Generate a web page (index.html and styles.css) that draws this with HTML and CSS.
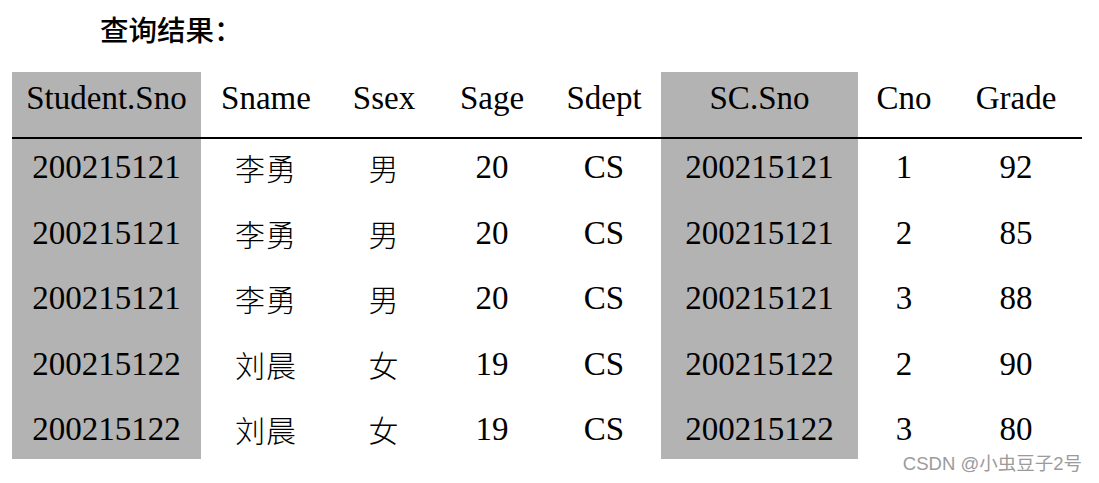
FILE: index.html
```html
<!DOCTYPE html>
<html lang="zh">
<head>
<meta charset="utf-8">
<title>查询结果</title>
<link rel="stylesheet" href="styles.css">
</head>
<body>
<div class="page">
  <h1 class="title">查询结果：</h1>
  <table class="result">
    <colgroup>
      <col class="c1"><col class="c2"><col class="c3"><col class="c4">
      <col class="c5"><col class="c6"><col class="c7"><col class="c8">
    </colgroup>
    <thead>
      <tr class="head">
        <th class="shade">Student.Sno</th><th>Sname</th><th>Ssex</th><th>Sage</th><th>Sdept</th><th class="shade">SC.Sno</th><th>Cno</th><th>Grade</th>
      </tr>
    </thead>
    <tbody>
      <tr class="row">
        <td class="shade">200215121</td><td><span class="cjk">李勇</span></td><td><span class="cjk">男</span></td><td>20</td><td>CS</td><td class="shade">200215121</td><td>1</td><td>92</td>
      </tr>
      <tr class="row">
        <td class="shade">200215121</td><td><span class="cjk">李勇</span></td><td><span class="cjk">男</span></td><td>20</td><td>CS</td><td class="shade">200215121</td><td>2</td><td>85</td>
      </tr>
      <tr class="row">
        <td class="shade">200215121</td><td><span class="cjk">李勇</span></td><td><span class="cjk">男</span></td><td>20</td><td>CS</td><td class="shade">200215121</td><td>3</td><td>88</td>
      </tr>
      <tr class="row">
        <td class="shade">200215122</td><td><span class="cjk">刘晨</span></td><td><span class="cjk">女</span></td><td>19</td><td>CS</td><td class="shade">200215122</td><td>2</td><td>90</td>
      </tr>
      <tr class="row last">
        <td class="shade">200215122</td><td><span class="cjk">刘晨</span></td><td><span class="cjk">女</span></td><td>19</td><td>CS</td><td class="shade">200215122</td><td>3</td><td>80</td>
      </tr>
    </tbody>
  </table>
  <div class="watermark">CSDN @小虫豆子2号</div>
</div>
</body>
</html>
```
FILE: styles.css
```css
html, body {
  margin: 0;
  padding: 0;
  background: #ffffff;
}

.page {
  position: relative;
  width: 1099px;
  height: 483px;
  overflow: hidden;
}

.title {
  margin: 0;
  padding: 13px 0 0 100px;
  height: 72px;
  box-sizing: border-box;
  font-family: "Noto Sans CJK SC", sans-serif;
  font-size: 28.5px;
  line-height: 32px;
  font-weight: 500;
  color: #000;
}

.result {
  margin-left: 12px;
  width: 1070px;
  table-layout: fixed;
  border-collapse: separate;
  border-spacing: 0;
  font-family: "Liberation Serif", "Noto Sans CJK SC", serif;
  font-size: 33px;
  line-height: 36px;
  color: #000;
}

.c1 { width: 189px; }
.c2 { width: 130px; }
.c3 { width: 106px; }
.c4 { width: 110px; }
.c5 { width: 114px; }
.c6 { width: 197px; }
.c7 { width: 92px; }
.c8 { width: 132px; }

.result th,
.result td {
  padding: 0;
  text-align: center;
  vertical-align: top;
  white-space: nowrap;
  font-weight: normal;
}

.head { height: 67px; }

.result th {
  padding-top: 8px;
  border-bottom: 2px solid #000;
}

.row { height: 65.5px; }
.row.last { height: 58px; }

.result td {
  padding-top: 10px;
}

.shade {
  background: #b3b3b3;
}

.cjk {
  font-family: "Noto Sans CJK SC", sans-serif;
  font-size: 30px;
  font-weight: 300;
  letter-spacing: 1px;
}

.watermark {
  position: absolute;
  right: 17px;
  top: 452px;
  font-family: "Liberation Sans", "Noto Sans CJK SC", sans-serif;
  font-size: 18.5px;
  line-height: 24px;
  color: #9b9b9b;
}
```
